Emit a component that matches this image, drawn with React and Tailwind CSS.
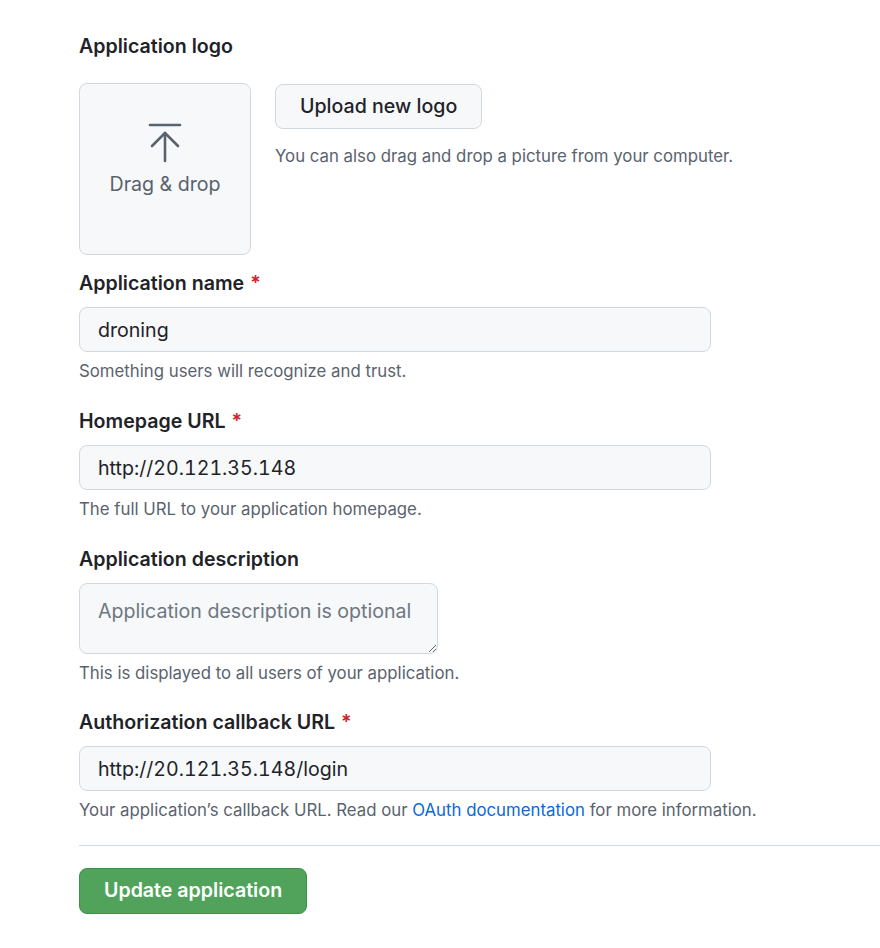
import { useState } from "react";

const font = { fontFamily: "Inter, 'Noto Sans', 'Liberation Sans', sans-serif" };

function Label({ children, required }) {
  return (
    <div className="text-[19.6px] leading-[28px] font-semibold text-[#1f2328]">
      {children}
      {required && <span className="text-[#cf222e] ml-[6px]">*</span>}
    </div>
  );
}

function Help({ children }) {
  return <p className="mt-[7px] text-[16.8px] leading-[24px] text-[#59636e]">{children}</p>;
}

function TextField({ value, onChange }) {
  return (
    <input
      value={value}
      onChange={(e) => onChange(e.target.value)}
      className="mt-[10px] block w-[632px] h-[45px] px-[18px] rounded-[8px] border border-[#d1d9e0] bg-[#f6f8fa] text-[19.6px] tabular-nums text-[#1f2328] outline-none"
    />
  );
}

export default function App() {
  const [name, setName] = useState("droning");
  const [home, setHome] = useState("http://20.121.35.148");
  const [desc, setDesc] = useState("");
  const [callback, setCallback] = useState("http://20.121.35.148/login");

  return (
    <div className="bg-white min-h-[948px] pl-[79px] pt-[32px]" style={font}>
      <Label>Application logo</Label>

      <div className="mt-[23px] flex gap-[24px]">
        <div className="w-[172px] h-[172px] rounded-[8px] border border-[#d1d9e0] bg-[#f6f8fa] flex flex-col items-center pt-[39px]">
          <svg width="34" height="40" viewBox="0 0 34 40" fill="none" stroke="#59636e" strokeWidth="2.6" strokeLinecap="round" strokeLinejoin="round">
            <path d="M2 2h30" />
            <path d="M17 10v28" />
            <path d="M4 23l13-13 13 13" />
          </svg>
          <div className="mt-[7px] text-[19.6px] leading-[28px] text-[#59636e]">Drag &amp; drop</div>
        </div>
        <div className="pt-px">
          <button className="h-[45px] px-[24px] rounded-[8px] border border-[#d1d9e0] bg-[#f6f8fa] text-[19.6px] font-medium text-[#1f2328]">
            Upload new logo
          </button>
          <p className="mt-[15px] text-[16.8px] leading-[24px] text-[#59636e]">
            You can also drag and drop a picture from your computer.
          </p>
        </div>
      </div>

      <div className="mt-[14px]">
        <Label required>Application name</Label>
        <TextField value={name} onChange={setName} />
        <Help>Something users will recognize and trust.</Help>
      </div>

      <div className="mt-[24px]">
        <Label required>Homepage URL</Label>
        <TextField value={home} onChange={setHome} />
        <Help>The full URL to your application homepage.</Help>
      </div>

      <div className="mt-[24px]">
        <Label>Application description</Label>
        <textarea
          value={desc}
          onChange={(e) => setDesc(e.target.value)}
          placeholder="Application description is optional"
          className="mt-[10px] block w-[359px] h-[71px] px-[18px] pt-[13px] rounded-[8px] border border-[#d1d9e0] bg-[#f6f8fa] text-[19.6px] leading-[28px] text-[#1f2328] placeholder:text-[#6e7781] outline-none"
        />
        <Help>This is displayed to all users of your application.</Help>
      </div>

      <div className="mt-[23px]">
        <Label required>Authorization callback URL</Label>
        <TextField value={callback} onChange={setCallback} />
        <Help>
          Your application’s callback URL. Read our{" "}
          <a href="#" className="text-[#0969da]">OAuth documentation</a> for more information.
        </Help>
      </div>

      <div className="mt-[23px] border-t border-[#d1d9e0]" />

      <button className="mt-[22px] h-[46px] px-[24px] rounded-[8px] border border-[#3f8f4a] bg-[#51a35b] text-[19.6px] font-semibold text-white">
        Update application
      </button>
    </div>
  );
}
